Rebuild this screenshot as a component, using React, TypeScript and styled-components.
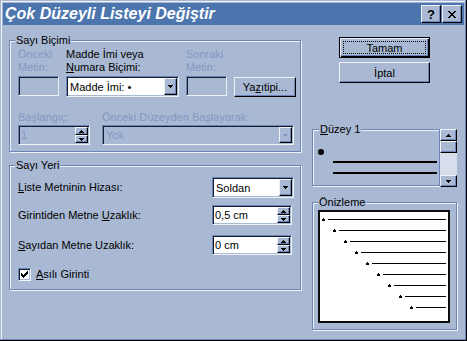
import React from 'react';
import styled, { createGlobalStyle, css } from 'styled-components';

const FACE = '#a9b9d3';
const WHITE = '#eef2f9';
const SHADOW = '#6c85b6';
const DARK = '#141c2c';
const DIS = '#8297c4';
const TITLE = '#4d75ad';
const TRACK = '#d6deec';
const FONT = '"Liberation Sans", Arial, sans-serif';

const GlobalStyle = createGlobalStyle`
  html, body {
    margin: 0;
    padding: 0;
    background: ${FACE};
  }
  body {
    font-family: ${FONT};
    font-size: 11px;
    color: #000;
  }
`;

const raised = css`
  box-sizing: border-box;
  background: ${FACE};
  border: 1px solid;
  border-color: ${WHITE} #000 #000 ${WHITE};
  box-shadow: inset -1px -1px 0 ${SHADOW};
`;

const Window = styled.div`
  width: 467px;
  height: 341px;
  box-sizing: border-box;
  padding: 3px;
  background: ${FACE};
  box-shadow: inset -1px -1px 0 #000, inset 1px 1px 0 ${FACE},
    inset -2px -2px 0 ${SHADOW}, inset 2px 2px 0 ${WHITE};
`;

const TitleBar = styled.div`
  height: 22px;
  display: flex;
  align-items: center;
  padding: 0 2px;
  background: ${TITLE};
`;

const TitleText = styled.span`
  flex: 1;
  color: #fff;
  font: italic bold 16px ${FONT};
  line-height: 22px;
  white-space: nowrap;
`;

const CapButton = styled.div<{ $gap?: number }>`
  ${raised};
  width: 20px;
  height: 18px;
  margin-left: ${(p) => p.$gap ?? 0}px;
  display: flex;
  align-items: center;
  justify-content: center;
  font: bold 13px ${FONT};
`;

const Body = styled.div`
  display: flex;
  align-items: flex-start;
  gap: 11px;
  padding: 12px 6px 0;
`;

const LeftColumn = styled.div`
  width: 292px;
  padding-top: 3px;
  display: flex;
  flex-direction: column;
`;

const RightColumn = styled.div`
  width: 145px;
  display: flex;
  flex-direction: column;
`;

const Group = styled.div<{ $h: number; $pad?: number; $top?: number }>`
  box-sizing: border-box;
  height: ${(p) => p.$h}px;
  margin-top: ${(p) => p.$top ?? 0}px;
  padding: 0 ${(p) => p.$pad ?? 8}px;
  border: 1px solid ${SHADOW};
  box-shadow: inset 1px 1px 0 ${WHITE}, 1px 1px 0 ${WHITE};
`;

const Caption = styled.div<{ $left: number }>`
  width: fit-content;
  margin: -7px 0 0 ${(p) => p.$left}px;
  padding: 0 1px;
  background: ${FACE};
  line-height: 13px;
`;

const Label = styled.div<{ $disabled?: boolean }>`
  line-height: 13px;
  white-space: nowrap;
  color: ${(p) => (p.$disabled ? DIS : '#000')};
`;

const Key = styled.span`
  text-decoration: underline;
  text-underline-offset: 1px;
`;

const FormatGrid = styled.div`
  display: grid;
  grid-template-columns: 41px 113px 41px 62px;
  grid-template-rows: 26px 21px;
  column-gap: 7px;
  row-gap: 2px;
  margin-top: 1px;
`;

const StartGrid = styled.div`
  display: grid;
  grid-template-columns: 72px 192px;
  column-gap: 12px;
  row-gap: 1px;
  margin-top: 14px;
`;

const Sunken = styled.div<{ $w: number; $h?: number; $white?: boolean }>`
  box-sizing: border-box;
  width: ${(p) => p.$w}px;
  height: ${(p) => p.$h ?? 20}px;
  display: flex;
  align-items: stretch;
  padding: 1px;
  border: 1px solid;
  border-color: ${SHADOW} ${WHITE} ${WHITE} ${SHADOW};
  box-shadow: inset 1px 1px 0 ${DARK}, inset -1px -1px 0 ${FACE};
  background: ${(p) => (p.$white ? '#fff' : FACE)};
`;

const FieldText = styled.div<{ $disabled?: boolean; $pad?: number }>`
  flex: 1;
  display: flex;
  align-items: center;
  padding-left: ${(p) => p.$pad ?? 2}px;
  white-space: nowrap;
  color: ${(p) => (p.$disabled ? DIS : '#000')};
`;

const DropButton = styled.div`
  ${raised};
  width: 13px;
  display: flex;
  align-items: center;
  justify-content: center;
`;

const SpinColumn = styled.div`
  width: 13px;
  display: flex;
  flex-direction: column;
`;

const SpinButton = styled.div`
  ${raised};
  flex: 1;
  display: flex;
  align-items: center;
  justify-content: center;
`;

const PushButton = styled.div<{ $default?: boolean; $w: number; $h?: number; $top?: number }>`
  box-sizing: border-box;
  width: ${(p) => p.$w}px;
  height: ${(p) => p.$h ?? 21}px;
  margin-top: ${(p) => p.$top ?? 0}px;
  display: flex;
  align-items: center;
  justify-content: center;
  background: ${FACE};
  border: 1px solid;
  ${(p) =>
    p.$default
      ? css`
          border-color: #000;
          box-shadow: inset 1px 1px 0 ${WHITE}, inset -1px -1px 0 #000,
            inset -2px -2px 0 ${SHADOW};
          outline: 1px dotted #000;
          outline-offset: -5px;
        `
      : css`
          border-color: ${WHITE} #000 #000 ${WHITE};
          box-shadow: inset -1px -1px 0 ${SHADOW};
        `}
`;

const ButtonSlot = styled.div`
  display: flex;
  justify-content: center;
`;

const PlaceRow = styled.div<{ $h: number; $top: number }>`
  display: grid;
  grid-template-columns: 194px auto;
  align-items: center;
  height: ${(p) => p.$h}px;
  margin-top: ${(p) => p.$top}px;
`;

const CheckRow = styled.div`
  display: flex;
  align-items: center;
  gap: 5px;
  margin-top: 13px;
  height: 13px;
`;

const CheckBox = styled.div`
  box-sizing: border-box;
  width: 13px;
  height: 13px;
  display: flex;
  align-items: center;
  justify-content: center;
  background: #fff;
  border: 1px solid;
  border-color: ${SHADOW} ${WHITE} ${WHITE} ${SHADOW};
  box-shadow: inset 1px 1px 0 ${DARK}, inset -1px -1px 0 ${FACE};
`;

const LevelRow = styled.div`
  display: flex;
  align-items: flex-start;
  margin-top: 46px;
`;

const ScrollBar = styled.div`
  width: 17px;
  height: 58px;
  display: flex;
  flex-direction: column;
  background: ${TRACK};
`;

const ScrollPart = styled.div<{ $h: number }>`
  ${raised};
  height: ${(p) => p.$h}px;
  display: flex;
  align-items: center;
  justify-content: center;
`;

const ScrollTrack = styled.div`
  flex: 1;
`;

const PreviewBox = styled.div`
  box-sizing: border-box;
  width: 132px;
  height: 113px;
  margin-top: 1px;
  background: #fff;
  border: 2px solid #0c0c0c;
`;

const Arrow = ({ up, color = '#000' }: { up?: boolean; color?: string }) => (
  <svg width="5" height="3" viewBox="0 0 5 3" shapeRendering="crispEdges">
    <path
      d={up ? 'M2 0h1v1H2z M1 1h3v1H1z M0 2h5v1H0z' : 'M0 0h5v1H0z M1 1h3v1H1z M2 2h1v1H2z'}
      fill={color}
    />
  </svg>
);

const CloseGlyph = () => (
  <svg width="8" height="7" viewBox="0 0 8 7" shapeRendering="crispEdges">
    <path
      d="M0 0h2v1H0z M6 0h2v1H6z M1 1h2v1H1z M5 1h2v1H5z M2 2h4v1H2z M3 3h2v1H3z M2 4h4v1H2z M1 5h2v1H1z M5 5h2v1H5z M0 6h2v1H0z M6 6h2v1H6z"
      fill="#000"
    />
  </svg>
);

const CheckGlyph = () => (
  <svg width="7" height="7" viewBox="0 0 7 7" shapeRendering="crispEdges">
    <path
      d="M6 0h1v1H6z M5 1h2v1H5z M0 2h1v1H0z M4 2h3v1H4z M0 3h2v1H0z M3 3h3v1H3z M0 4h5v1H0z M1 5h3v1H1z M2 6h1v1H2z"
      fill="#000"
    />
  </svg>
);

const Combo = ({ w, h, text, disabled }: { w: number; h?: number; text: string; disabled?: boolean }) => (
  <Sunken $w={w} $h={h} $white={!disabled}>
    <FieldText $disabled={disabled}>{text}</FieldText>
    <DropButton>
      <Arrow color={disabled ? DIS : '#000'} />
    </DropButton>
  </Sunken>
);

const Spin = ({ w, text, disabled }: { w: number; text: string; disabled?: boolean }) => (
  <Sunken $w={w} $white={!disabled}>
    <FieldText $disabled={disabled} $pad={1}>
      {text}
    </FieldText>
    <SpinColumn>
      <SpinButton>
        <Arrow up />
      </SpinButton>
      <SpinButton>
        <Arrow />
      </SpinButton>
    </SpinColumn>
  </Sunken>
);

const LevelDrawing = () => (
  <svg width="126" height="48" shapeRendering="crispEdges">
    <circle cx="8" cy="16" r="3" fill="#000" shapeRendering="auto" />
    <rect x="20" y="25" width="104" height="2" fill="#000" />
    <rect x="20" y="36" width="104" height="2" fill="#000" />
  </svg>
);

const PreviewDrawing = () => (
  <svg width="128" height="109" shapeRendering="crispEdges">
    {Array.from({ length: 9 }, (_, i) => {
      const x = 3 + 11 * i;
      const y = 7 + 11 * i;
      return (
        <g key={i} fill="#000">
          <rect x={x} y={y - 1} width="1" height="1" />
          <rect x={x - 1} y={y} width="3" height="2" />
          <rect x={x + 5} y={y} width={126 - (x + 5)} height="1" />
        </g>
      );
    })}
  </svg>
);

const App: React.FC = () => {
  return (
    <>
      <GlobalStyle />
      <Window>
        <TitleBar>
          <TitleText>Çok Düzeyli Listeyi Değiştir</TitleText>
          <CapButton>?</CapButton>
          <CapButton $gap={1}>
            <CloseGlyph />
          </CapButton>
        </TitleBar>
        <Body>
          <LeftColumn>
            <Group $h={112}>
              <Caption $left={-3}>Sayı Biçimi</Caption>
              <FormatGrid>
                <Label $disabled>
                  Önceki
                  <br />
                  Metin:
                </Label>
                <Label>
                  Madde İmi veya
                  <br />
                  <Key>N</Key>umara Biçimi:
                </Label>
                <Label $disabled>
                  Sonraki
                  <br />
                  Metin:
                </Label>
                <div />
                <Sunken $w={41} />
                <Combo w={113} h={21} text="Madde İmi:  •" />
                <Sunken $w={41} />
                <PushButton $w={62} $h={20} $top={1}>
                  Ya<Key>z</Key>ıtipi...
                </PushButton>
              </FormatGrid>
              <StartGrid>
                <Label $disabled>Başlangıç:</Label>
                <Label $disabled>Önceki Düzeyden Başlayarak:</Label>
                <Spin w={72} text="1" disabled />
                <Combo w={192} text="Yok" disabled />
              </StartGrid>
            </Group>
            <Group $h={125} $top={13}>
              <Caption $left={-3}>Sayı Yeri</Caption>
              <PlaceRow $h={21} $top={5}>
                <Label>
                  <Key>L</Key>iste Metninin Hizası:
                </Label>
                <Combo w={82} h={21} text="Soldan" />
              </PlaceRow>
              <PlaceRow $h={20} $top={7}>
                <Label>
                  Girintiden Metne <Key>U</Key>zaklık:
                </Label>
                <Spin w={80} text="0,5 cm" />
              </PlaceRow>
              <PlaceRow $h={20} $top={10}>
                <Label>
                  <Key>S</Key>ayıdan Metne Uzaklık:
                </Label>
                <Spin w={80} text="0 cm" />
              </PlaceRow>
              <CheckRow>
                <CheckBox>
                  <CheckGlyph />
                </CheckBox>
                <Label>
                  <Key>A</Key>sılı Girinti
                </Label>
              </CheckRow>
            </Group>
          </LeftColumn>
          <RightColumn>
            <ButtonSlot>
              <PushButton $default $w={91}>
                Tamam
              </PushButton>
            </ButtonSlot>
            <ButtonSlot>
              <PushButton $w={91} $top={4}>
                İptal
              </PushButton>
            </ButtonSlot>
            <LevelRow>
              <Group $h={57} $pad={0} style={{ width: 128 }}>
                <Caption $left={6}>
                  <Key>D</Key>üzey 1
                </Caption>
                <LevelDrawing />
              </Group>
              <ScrollBar>
                <ScrollPart $h={12}>
                  <Arrow up />
                </ScrollPart>
                <ScrollPart $h={12} />
                <ScrollTrack />
                <ScrollPart $h={12}>
                  <Arrow />
                </ScrollPart>
              </ScrollBar>
            </LevelRow>
            <Group $h={128} $pad={5} $top={15}>
              <Caption $left={0}>Önizleme</Caption>
              <PreviewBox>
                <PreviewDrawing />
              </PreviewBox>
            </Group>
          </RightColumn>
        </Body>
      </Window>
    </>
  );
};

export default App;
